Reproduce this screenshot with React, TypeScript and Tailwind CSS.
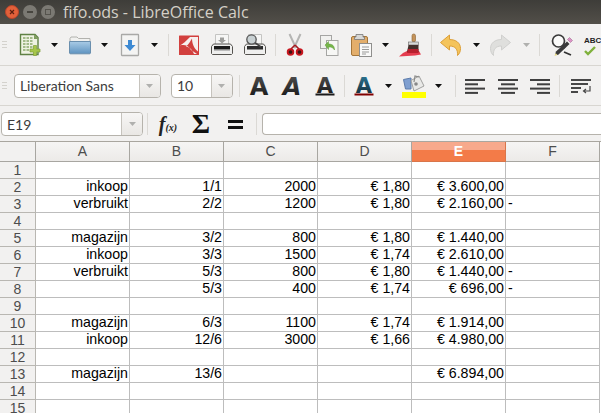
const UI = '"Open Sans", "Noto Sans", sans-serif'
const COMBO = 'Lato, "Open Sans", sans-serif'
const CELL = '"Liberation Sans", Arial, sans-serif'

function Caret({ off }: { off?: boolean }) {
  return (
    <svg width="7" height="4" viewBox="0 0 7 4">
      <path d="M0 0h7L3.5 4z" fill={off ? '#b0b0ae' : '#111'} />
    </svg>
  )
}

function Sep() {
  return <div className="w-px h-[22px] bg-[#dbd9d5] shrink-0" />
}

function Grip() {
  return (
    <div className="flex flex-col gap-[2px]">
      {[1, 2, 3].map(i => <div key={i} className="w-[5px] h-px bg-[#d4d2cd]" />)}
    </div>
  )
}

function Ico({ children }: { children: React.ReactNode }) {
  return <svg width="24" height="24" viewBox="0 0 24 24" className="shrink-0">{children}</svg>
}

function IconNew() {
  return (
    <Ico>
      <path d="M3.5 1.5H18l3 3v17H3.5z" fill="#eef2e2" stroke="#5f8144" strokeWidth="1.4" />
      <path d="M17 1.5l4.500 4.500H17z" fill="#7d9c5c" />
      {[5, 8, 11, 14, 17].map(y => <path key={y} d={`M6 ${y}h10`} stroke="#8ba86c" strokeWidth="1.6" strokeDasharray="2.500 1" />)}
      <path d="M16.500 12.500h3v3.500h3.500v3h-3.500v3.500h-3V19H13v-3h3.500z" fill="#a6c64a" stroke="#7f9f33" strokeWidth=".7" />
    </Ico>
  )
}

function IconFolder() {
  return (
    <Ico>
      <defs>
        <linearGradient id="fo" x1="0" y1="0" x2="0" y2="1">
          <stop offset="0" stopColor="#a9cbe6" />
          <stop offset="1" stopColor="#5e93c0" />
        </linearGradient>
      </defs>
      <path d="M2 5.500l1-1.500h6l1.500 1.500H22V10H2z" fill="#f1f1ef" stroke="#b2b2ae" />
      <path d="M1.500 8.500h21v11.500l-.6.800H2.100l-.6-.8z" fill="url(#fo)" stroke="#6a8fae" />
    </Ico>
  )
}

function IconSave() {
  return (
    <Ico>
      <rect x="3.500" y="1.500" width="17" height="21" rx=".5" fill="#f4f4f3" stroke="#a9a9a7" strokeWidth="1.300" />
      <path d="M10 7h4v5h3.500L12 18l-5.500-6H10z" fill="#3d8ad3" />
    </Ico>
  )
}

function IconPdf() {
  return (
    <Ico>
      <rect x="2" y="2.500" width="20" height="19.500" rx=".5" fill="#d2403e" />
      <path d="M21 4h-8C9 8 6 11 3 12.500 7 11.500 11 12 14 17l6 4h-3c-2-5-5-7-8-7.500C12 11 14 7 15 5.500c0 5 2 10 6 13z" fill="#f6efee" />
    </Ico>
  )
}

function IconPrint() {
  return (
    <Ico>
      <path d="M5.500 1.500h13v11h-13z" fill="#f6f6f5" stroke="#c4c4c2" />
      <path d="M10 4.500h4V7h2l-4 3.500L8 7h2z" fill="#9d9d9b" />
      <path d="M1.500 13.500l2-2.500h17l2 2.500v7l-1 1h-19l-1-1z" fill="#efefee" stroke="#55534f" />
      <path d="M4 13h16v3.500H4z" fill="#1b1b1b" />
      <path d="M4 17.500h16" stroke="#bbb" />
    </Ico>
  )
}

function IconPreview() {
  return (
    <Ico>
      <path d="M5.500 1.500h13v11h-13z" fill="#f6f6f5" stroke="#c4c4c2" />
      <path d="M1.500 13.500l2-2.500h17l2 2.500v7l-1 1h-19l-1-1z" fill="#efefee" stroke="#55534f" />
      <path d="M4 13h16v3.500H4z" fill="#2b2b2b" />
      <path d="M11 9l7 5" stroke="#444" strokeWidth="1.600" />
      <circle cx="8.500" cy="6.500" r="4.700" fill="#c9d1d3" stroke="#555" strokeWidth="1.300" />
    </Ico>
  )
}

function IconCut() {
  return (
    <Ico>
      <path d="M6.500 1l6.500 14M17.500 1L11 15" stroke="#b5b5b3" strokeWidth="2" fill="none" />
      <path d="M12 12L8 16M12 12l4 4" stroke="#a61a1f" strokeWidth="1.600" />
      <circle cx="7.500" cy="19" r="2.800" fill="#3a1212" stroke="#c8171f" strokeWidth="1.900" />
      <circle cx="16.500" cy="19" r="2.800" fill="#3a1212" stroke="#c8171f" strokeWidth="1.900" />
    </Ico>
  )
}

function IconCopy() {
  return (
    <Ico>
      <rect x="3.500" y="2.500" width="11" height="13" fill="#f1f1ef" stroke="#a5a5a3" />
      <rect x="9.500" y="7.500" width="11.500" height="15" fill="#f7f7f5" stroke="#a5a5a3" />
      <path d="M8 12l3.500-3.500V11c4 0 6 2 6 6-1.500-2.500-3-3-6-3v2.500z" fill="#76b54a" stroke="#5c9a36" strokeWidth=".5" />
    </Ico>
  )
}

function IconPaste() {
  return (
    <Ico>
      <rect x="2.500" y="3.500" width="16" height="19" rx="1.500" fill="#e3ae6b" stroke="#a4763a" />
      <path d="M7 4V1.500h7V4h1.500v2.500h-10V4z" fill="#d8d8d6" stroke="#777" strokeWidth=".8" />
      <rect x="10.500" y="10.500" width="12" height="13" fill="#f9f9f8" stroke="#8f8f8d" />
      <path d="M13 14h7M13 16.500h7M13 19h7M13 21h4" stroke="#9a9a98" />
    </Ico>
  )
}

function IconBrush() {
  return (
    <Ico>
      <path d="M0 23.500l4-3.500 4-2h12l2 3.500-6 1z" fill="#e3293d" opacity=".9" />
      <rect x="13" y="1" width="3.500" height="8" rx="1.700" fill="#c4935a" stroke="#8a6230" strokeWidth=".6" />
      <rect x="9.500" y="9" width="10" height="3" fill="#d9d9d7" stroke="#666" strokeWidth=".6" />
      <path d="M9.500 12h10v7H8z" fill="#45302c" />
      <path d="M9 16h10.500v4H8z" fill="#b8202e" />
    </Ico>
  )
}

function IconArrow({ flip, off }: { flip?: boolean; off?: boolean }) {
  return (
    <Ico>
      <g transform={flip ? 'matrix(-1 0 0 1 24 0)' : undefined}>
        <path
          d="M1.500 9.500L10.500 2v4.500c6.500 0 11 3.500 11 9 0 3-1 5-3 7 .5-6-2-9.500-8-9.500V17z"
          fill={off ? '#dfdfdd' : '#f4c45c'}
          stroke={off ? '#d0d0ce' : '#dd9f37'}
        />
      </g>
    </Ico>
  )
}

function IconFind() {
  return (
    <Ico>
      <path d="M12 12l3 3M14 19l7 3" stroke="#333" strokeWidth="1.800" />
      <circle cx="8.500" cy="8" r="6" fill="#fbfbfa" stroke="#3a3a3a" strokeWidth="1.700" />
      <path d="M5 21.500l1-3L17 8.500l2.500 2.500L8 22z" fill="#3a3a3a" />
      <path d="M17.500 6.500l2-2 3 3-2 2z" fill="#dc93c6" stroke="#945c82" strokeWidth=".5" />
      <path d="M4.500 23l1-3 2 2z" fill="#e8dc8c" />
    </Ico>
  )
}

function BigA({ id, from, to, italic, bar }: { id: string; from: string; to: string; italic?: boolean; bar?: string }) {
  return (
    <svg width="26" height="32" viewBox="-1 -4 26 32" className="shrink-0">
      <defs>
        <linearGradient id={id} x1="0" y1="0" x2="0" y2="1">
          <stop offset="0" stopColor={from} />
          <stop offset="1" stopColor={to} />
        </linearGradient>
      </defs>
      <text
        x="12"
        y={bar ? 18.500 : 20.500}
        textAnchor="middle"
        fontFamily="DejaVu Sans"
        fontWeight="700"
        fontStyle={italic ? 'italic' : 'normal'}
        fontSize={bar ? 21 : 24}
        fill={`url(#${id})`}
      >
        A
      </text>
      {bar && <rect x="2.500" y="19.500" width="19" height="2" fill={bar} />}
    </svg>
  )
}

function IconBucket() {
  return (
    <svg width="24" height="24" viewBox="0 0 24 24" className="shrink-0">
      <path d="M1.500 5.500L9 4v11H3.500z" fill="#7f9fd0" stroke="#5d7cab" />
      <path d="M9 6.500L17 2l5 10-10 5z" fill="#e9e9e7" stroke="#a0a09e" />
      <path d="M12 8l1-6 4 1" fill="none" stroke="#8a8a88" strokeWidth="1.200" />
      <circle cx="14" cy="10" r="1.800" fill="#888" />
      <rect x="0" y="18" width="24" height="6" fill="#ffff00" />
    </svg>
  )
}

function Lines({ rows }: { rows: [number, number][] }) {
  return (
    <Ico>
      {rows.map(([x, w], i) => <rect key={i} x={x} y={5 + i * 4.300} width={w} height="2" fill="#3f3f3f" />)}
    </Ico>
  )
}

function IconWrap() {
  return (
    <Ico>
      <path d="M2 6h20M2 10h17M2 14h10M2 18h7" stroke="#474747" strokeWidth="2" />
      <path d="M21 12v5h-6M17 15l-2.500 2 2.500 2" stroke="#474747" strokeWidth="1.200" fill="none" />
    </Ico>
  )
}

function Combo({ w, btn, text }: { w: string; btn: string; text: string }) {
  return (
    <div className={`${w} h-full flex border border-[#b6b3ac] rounded-[4px] bg-white overflow-hidden shrink-0`}>
      <div className="flex-1 flex items-center pl-[5px] text-[14px] text-[#3c3c3c]" style={{ fontFamily: COMBO }}>{text}</div>
      <div className={`${btn} border-l border-[#c6c3bd] bg-linear-to-b from-[#f7f6f5] to-[#e9e7e4] flex items-center justify-center`}>
        <Caret off />
      </div>
    </div>
  )
}

const COLS = ['A', 'B', 'C', 'D', 'E', 'F']

const RIJEN: (string[] | null)[] = [
  null,
  ['inkoop', '1/1', '2000', '€ 1,80', '€ 3.600,00', ''],
  ['verbruikt', '2/2', '1200', '€ 1,80', '€ 2.160,00', '-'],
  null,
  ['magazijn', '3/2', '800', '€ 1,80', '€ 1.440,00', ''],
  ['inkoop', '3/3', '1500', '€ 1,74', '€ 2.610,00', ''],
  ['verbruikt', '5/3', '800', '€ 1,80', '€ 1.440,00', '-'],
  ['', '5/3', '400', '€ 1,74', '€ 696,00', '-'],
  null,
  ['magazijn', '6/3', '1100', '€ 1,74', '€ 1.914,00', ''],
  ['inkoop', '12/6', '3000', '€ 1,66', '€ 4.980,00', ''],
  null,
  ['magazijn', '13/6', '', '', '€ 6.894,00', ''],
  null,
  null,
]

export default function App() {
  return (
    <div className="w-[601px] h-[413px] overflow-hidden bg-[#f2f1f0] flex flex-col">
      {/* Titelbalk */}
      <div className="h-6 shrink-0 flex items-center bg-linear-to-b from-[#3e3d39] to-[#524f49]">
        <div className="flex items-center gap-[4px] ml-[5px]">
          <div className="w-[14px] h-[14px] rounded-full bg-[#e2603a] border border-[#b9452a] flex items-center justify-center">
            <svg width="6" height="6" viewBox="0 0 6 6"><path d="M1 1l4 4M5 1L1 5" stroke="#5a1f10" strokeWidth="1.200" /></svg>
          </div>
          <div className="w-[14px] h-[14px] rounded-full bg-[#7b7973] flex items-center justify-center">
            <div className="w-[6px] h-[2px] bg-[#47453f]" />
          </div>
          <div className="w-[14px] h-[14px] rounded-full bg-[#7b7973] flex items-center justify-center">
            <div className="w-[6px] h-[6px] border border-[#55534d]" />
          </div>
        </div>
        <span className="ml-[8px] text-[16px] leading-[20px] text-[#d4d0c7] whitespace-nowrap" style={{ fontFamily: UI }}>fifo.ods - LibreOffice Calc</span>
      </div>

      {/* Standaard werkbalk */}
      <div className="h-[42px] shrink-0 flex items-center border-b border-[#d8d6d1] overflow-hidden">
        <div className="w-[17px] pl-[2px]"><Grip /></div>
        <div className="w-[24px] flex justify-center"><IconNew /></div>
        <div className="w-[28px] flex justify-center"><Caret /></div>
        <div className="w-[23px] flex justify-center"><IconFolder /></div>
        <div className="w-[26px] flex justify-center"><Caret /></div>
        <div className="w-[24px] flex justify-center"><IconSave /></div>
        <div className="w-[26px] flex justify-center"><Caret /></div>
        <Sep />
        <div className="w-[40px] flex justify-center"><IconPdf /></div>
        <div className="w-[26px] flex justify-center"><IconPrint /></div>
        <div className="w-[40px] flex justify-center"><IconPreview /></div>
        <Sep />
        <div className="w-[38px] flex justify-center"><IconCut /></div>
        <div className="w-[30px] flex justify-center"><IconCopy /></div>
        <div className="w-[36px] flex justify-center"><IconPaste /></div>
        <div className="w-[12px] flex justify-center"><Caret /></div>
        <div className="w-[40px] flex justify-center"><IconBrush /></div>
        <Sep />
        <div className="w-[38px] flex justify-center"><IconArrow /></div>
        <div className="w-[12px] flex justify-center"><Caret /></div>
        <div className="w-[36px] flex justify-center"><IconArrow flip off /></div>
        <div className="w-[16px] flex justify-center"><Caret off /></div>
        <div className="w-[5px]" />
        <Sep />
        <div className="w-[44px] flex justify-center"><IconFind /></div>
        <div className="w-[17px] shrink-0 h-[24px]">
          <span className="block w-[17px] overflow-hidden text-[8px] font-bold leading-[10px] text-[#222] mt-[3px] whitespace-nowrap" style={{ fontFamily: CELL }}>ABC</span>
          <svg width="12" height="10" viewBox="0 0 12 10"><path d="M1 5l3 3 7-7" stroke="#7fb13c" strokeWidth="2.400" fill="none" /></svg>
        </div>
      </div>

      {/* Opmaak werkbalk */}
      <div className="h-[40px] shrink-0 flex items-center border-b border-[#d8d6d1] overflow-hidden">
        <div className="w-[14px] pl-[2px]"><Grip /></div>
        <div className="h-6 flex items-center">
          <Combo w="w-[147px]" btn="w-[21px]" text="Liberation Sans" />
          <div className="w-[10px]" />
          <Combo w="w-[62px]" btn="w-[21px]" text="10" />
        </div>
        <div className="w-[6px]" />
        <Sep />
        <div className="w-[39px] flex justify-center"><BigA id="a1" from="#555" to="#111" /></div>
        <div className="w-[27px] flex justify-center"><BigA id="a2" from="#555" to="#111" italic /></div>
        <div className="w-[39px] flex justify-center"><BigA id="a3" from="#555" to="#111" bar="#1a1a1a" /></div>
        <Sep />
        <div className="w-[38px] flex justify-center"><BigA id="a4" from="#2f7d9c" to="#10222c" bar="#800000" /></div>
        <div className="w-[12px] flex justify-center"><Caret /></div>
        <div className="w-[40px] flex justify-center"><IconBucket /></div>
        <div className="w-[8px] flex justify-center"><Caret /></div>
        <div className="w-[13px]" />
        <Sep />
        <div className="w-[38px] flex justify-center"><Lines rows={[[2, 20], [2, 13], [2, 20], [2, 13]]} /></div>
        <div className="w-[28px] flex justify-center"><Lines rows={[[2, 20], [5, 14], [2, 20], [5, 14]]} /></div>
        <div className="w-[38px] flex justify-center"><Lines rows={[[2, 20], [9, 13], [2, 20], [9, 13]]} /></div>
        <Sep />
        <div className="w-[41px] flex justify-center"><IconWrap /></div>
      </div>

      {/* Formulebalk */}
      <div className="h-[35px] shrink-0 flex items-center pt-[1px]">
        <div className="h-6 flex items-center pl-px">
          <Combo w="w-[142px]" btn="w-[21px]" text="E19" />
        </div>
        <div className="w-[4px]" />
        <Sep />
        <div className="w-[40px] flex items-baseline justify-center text-[#222]" style={{ fontFamily: '"Liberation Serif", serif' }}>
          <span className="text-[20px] italic font-bold leading-none">f</span>
          <span className="text-[10px] italic font-bold leading-none">(x)</span>
        </div>
        <div className="w-[26px] text-center text-[28px] leading-none font-bold text-[#111]" style={{ fontFamily: '"Liberation Serif", serif' }}>Σ</div>
        <div className="w-[42px] flex flex-col items-center gap-[3px]">
          <div className="w-[15px] h-[3px] bg-[#111]" />
          <div className="w-[15px] h-[3px] bg-[#111]" />
        </div>
        <Sep />
        <div className="w-[5px]" />
        <div className="flex-1 h-[22px] border border-[#b6b3ac] rounded-l-[4px] border-r-0 bg-white" />
      </div>

      {/* Werkblad */}
      <div
        className="flex-1 grid grid-cols-[36px_94px_94px_94px_94px_94px_94px_1px] auto-rows-[17px] grid-rows-[20px] border-t border-[#a9a69f] bg-white text-[14.2px] text-black overflow-hidden"
        style={{ fontFamily: CELL }}
      >
        <div className="border-r border-b border-[#a8a6a1] bg-[#f2f1f0]" />
        {COLS.map(c => (
          <div
            key={c}
            className={c === 'E'
              ? 'border-r border-b border-[#d9754a] bg-linear-to-b from-[#f7a98c] from-40% to-[#f37b48] to-40% text-white font-bold flex items-center justify-center text-[14px]'
              : 'border-r border-b border-[#a8a6a1] bg-linear-to-b from-[#f6f5f4] to-[#eceae8] text-[#4d4d4d] flex items-center justify-center text-[14px]'}
          >
            {c}
          </div>
        ))}
        <div className="bg-white" />
        {RIJEN.map((rij, r) => (
          <Rij key={r} nr={r + 1} rij={rij} />
        ))}
      </div>
    </div>
  )
}

function Rij({ nr, rij }: { nr: number; rij: string[] | null }) {
  return (
    <>
      <div className="border-r border-b border-[#b9b7b2] bg-[#f2f1f0] text-[#4d4d4d] text-[14px] leading-[16px] text-center">{nr}</div>
      {COLS.map((c, i) => (
        <div
          key={c}
          className={c === 'F'
            ? 'border-r border-b border-[#bdbdbd] leading-[15px] pl-[2px] whitespace-nowrap'
            : 'border-r border-b border-[#bdbdbd] leading-[15px] pr-[1px] text-right whitespace-nowrap'}
        >
          {rij ? rij[i] : ''}
        </div>
      ))}
      <div className="bg-white" />
    </>
  )
}
